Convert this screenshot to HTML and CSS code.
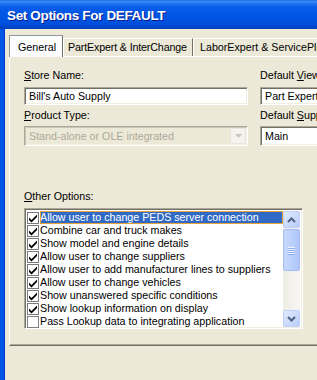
FILE: index.html
```html
<!DOCTYPE html>
<html lang="en">
<head>
    <meta charset="UTF-8">
    <title>Set Options For DEFAULT</title>
<link rel="stylesheet" href="styles.css">
</head>
<body>
    <div class="window">
        <div class="titlebar">
            <span class="title">Set Options For DEFAULT</span>
        </div>
        <div class="client">
            <div class="tabs">
                <div class="tab active">General</div>
                <div class="tab tab-part">PartExpert &amp; InterChange</div>
                <div class="tab tab-labor">LaborExpert &amp; ServicePlus</div>
            </div>
            <div class="panel">
                <div class="fields">
                    <div class="col col-left">
                        <div class="label"><u>S</u>tore Name:</div>
                        <div class="textbox">Bill's Auto Supply</div>
                        <div class="label label-gap"><u>P</u>roduct Type:</div>
                        <div class="combo disabled">
                            <span class="combo-text">Stand-alone or OLE integrated</span>
                            <span class="drop">
                                <svg width="7" height="4" viewBox="0 0 7 4"><path d="M0 0h7L3.5 4z" fill="#c9c7ba"/></svg>
                            </span>
                        </div>
                    </div>
                    <div class="col col-right">
                        <div class="label">Default <u>V</u>iew:</div>
                        <div class="textbox">Part Expert® InterChange</div>
                        <div class="label label-gap">Default <u>S</u>upplier:</div>
                        <div class="textbox tall">Main</div>
                    </div>
                </div>
                <div class="label label-other"><u>O</u>ther Options:</div>
                <div class="listbox">
                    <ul class="items">
                        <li class="item selected"><span class="check on"></span><span class="item-text">Allow user to change PEDS server connection</span></li>
                        <li class="item"><span class="check on"></span><span class="item-text">Combine car and truck makes</span></li>
                        <li class="item"><span class="check on"></span><span class="item-text">Show model and engine details</span></li>
                        <li class="item"><span class="check on"></span><span class="item-text">Allow user to change suppliers</span></li>
                        <li class="item"><span class="check on"></span><span class="item-text">Allow user to add manufacturer lines to suppliers</span></li>
                        <li class="item"><span class="check on"></span><span class="item-text">Allow user to change vehicles</span></li>
                        <li class="item"><span class="check on"></span><span class="item-text">Show unanswered specific conditions</span></li>
                        <li class="item"><span class="check on"></span><span class="item-text">Show lookup information on display</span></li>
                        <li class="item"><span class="check"></span><span class="item-text">Pass Lookup data to integrating application</span></li>
                    </ul>
                    <div class="scrollbar">
                        <div class="sb-btn">
                            <svg width="9" height="6" viewBox="0 0 9 6"><path d="M1 5l3.5-3.5L8 5" fill="none" stroke="#4d6185" stroke-width="2"/></svg>
                        </div>
                        <div class="sb-thumb">
                            <span class="grip"></span><span class="grip"></span><span class="grip"></span><span class="grip"></span>
                        </div>
                        <div class="sb-track"></div>
                        <div class="sb-btn">
                            <svg width="9" height="6" viewBox="0 0 9 6"><path d="M1 1l3.5 3.5L8 1" fill="none" stroke="#4d6185" stroke-width="2"/></svg>
                        </div>
                    </div>
                </div>
            </div>
        </div>
    </div>
</body>
</html>
```

FILE: styles.css
```css
body {
    margin: 0;
    width: 317px;
    height: 380px;
    overflow: hidden;
    background-color: #ece9d8;
    font-family: "Liberation Sans", Arial, sans-serif;
    font-size: 10.7px;
    color: #000000;
}
.window {
    width: 380px;
    height: 380px;
    border-left: 4px solid #0055e5;
    box-shadow: inset 1px 0 0 #0831d9;
    box-sizing: border-box;
}
.titlebar {
    height: 29px;
    margin-left: -4px;
    padding-left: 7px;
    display: flex;
    align-items: center;
    background: linear-gradient(to bottom, #0a5fd8 0, #3d8ff5 1px, #2a7af2 3px, #0a5de9 7px, #0055e5 16px, #004fdb 24px, #0043c6 28px, #003cb4 29px);
}
.title {
    color: #ffffff;
    font-weight: bold;
    font-size: 13.5px;
    letter-spacing: -0.35px;
    text-shadow: 1px 1px 0 #0a1e8c;
    padding-top: 1px;
}
.client {
    padding: 6px 0 0 5px;
}
.tabs {
    display: flex;
    align-items: flex-end;
    height: 21px;
}
.tab {
    height: 18px;
    box-sizing: border-box;
    padding: 2px 5px 0 5px;
    line-height: 13px;
    border-top: 1px solid #ffffff;
    border-left: 1px solid #ffffff;
    border-right: 1px solid #716f64;
    white-space: nowrap;
}
.tab.active {
    height: 22px;
    margin-bottom: -1px;
    padding: 5px 6px 0 8px;
    background-color: #fcfcfe;
    border-top-color: #919b9c;
    border-left-color: #919b9c;
    border-right: 1px solid #716f64;
    position: relative;
    z-index: 1;
}
.tab-part {
    width: 130px;
    padding-left: 4px;
    padding-right: 0;
    letter-spacing: -0.15px;
}
.tab-labor {
    padding-left: 6px;
}
.panel {
    height: 290px;
    box-sizing: border-box;
    padding: 12px 0 0 14px;
    border-top: 1px solid #ffffff;
    border-left: 1px solid #ffffff;
    border-bottom: 1px solid #716f64;
    box-shadow: inset 0 -1px 0 #aca899;
}
.fields {
    display: flex;
    gap: 12px;
}
.col-left {
    width: 224px;
}
.col-right {
    width: 120px;
}
.label {
    line-height: 13px;
    height: 13px;
    white-space: nowrap;
}
.label-gap {
    margin-top: 4px;
}
.textbox {
    margin-top: 5px;
    height: 18px;
    box-sizing: border-box;
    background-color: #ffffff;
    border-top: 1px solid #aca899;
    border-left: 1px solid #aca899;
    border-bottom: 1px solid #ffffff;
    border-right: 1px solid #ffffff;
    box-shadow: inset 1px 1px 0 #716f64, inset -1px -1px 0 #f1efe2;
    padding: 2px 0 0 4px;
    line-height: 13px;
    white-space: nowrap;
    overflow: hidden;
}
.textbox.tall {
    margin-top: 4px;
    height: 20px;
    padding-top: 3px;
}
.combo {
    margin-top: 4px;
    height: 20px;
    box-sizing: border-box;
    display: flex;
    align-items: center;
    justify-content: space-between;
    background-color: #ece9d8;
    border-top: 1px solid #aca899;
    border-left: 1px solid #aca899;
    border-bottom: 1px solid #ffffff;
    border-right: 1px solid #ffffff;
    box-shadow: inset 1px 1px 0 #c9c7ba, inset -1px -1px 0 #f1efe2;
    padding: 0 1px 0 4px;
}
.combo-text {
    color: #aca899;
    white-space: nowrap;
}
.drop {
    width: 16px;
    height: 16px;
    box-sizing: border-box;
    display: flex;
    align-items: center;
    justify-content: center;
    background-color: #f4f3ee;
    border: 1px solid #e8e6de;
}
.label-other {
    margin-top: 44px;
}
.listbox {
    margin-top: 5px;
    width: 279px;
    height: 121px;
    box-sizing: border-box;
    display: flex;
    background-color: #ffffff;
    border-top: 1px solid #aca899;
    border-left: 1px solid #aca899;
    border-bottom: 1px solid #ffffff;
    border-right: 1px solid #ffffff;
    box-shadow: inset 1px 1px 0 #716f64, inset -1px -1px 0 #f1efe2;
    padding: 2px 2px 1px 2px;
}
.items {
    list-style: none;
    margin: 0;
    padding: 0;
    flex: 1;
}
.item {
    display: flex;
    align-items: center;
    height: 13px;
    line-height: 13px;
    white-space: nowrap;
}
.check {
    width: 12px;
    height: 12px;
    margin-right: 1px;
    border: 1px solid #808080;
    box-sizing: border-box;
    background-color: #ffffff;
    flex-shrink: 0;
}
.check.on {
    border-color: #7a7a7a;
    background: #ffffff url("data:image/svg+xml,%3Csvg xmlns='http://www.w3.org/2000/svg' width='10' height='10' viewBox='0 0 10 10'%3E%3Cpath d='M1 4.5l2.5 2.5L9 1.5v2.5L3.5 9.5 1 7z' fill='%23000'/%3E%3C/svg%3E") center no-repeat;
}
.item-text {
    padding: 0 2px 0 0;
    flex: 1;
}
.item.selected .item-text {
    background-color: #316ac5;
    color: #ffffff;
    outline: 1px solid #e6a33c;
    outline-offset: -1px;
}
.scrollbar {
    width: 17px;
    display: flex;
    flex-direction: column;
    background: linear-gradient(to right, #eeede5, #f7f6f2);
}
.sb-btn {
    height: 17px;
    box-sizing: border-box;
    border: 1px solid #bcd0f9;
    border-radius: 2px;
    background: linear-gradient(to bottom right, #e1eafe, #b8cdf9);
    display: flex;
    align-items: center;
    justify-content: center;
}
.sb-thumb {
    height: 42px;
    margin-top: 1px;
    box-sizing: border-box;
    border: 1px solid #a6bcf0;
    border-radius: 2px;
    background: linear-gradient(to right, #c9d8fc, #b9cffb 60%, #adc4f7);
    display: flex;
    flex-direction: column;
    align-items: center;
    justify-content: center;
    gap: 1px;
}
.grip {
    width: 7px;
    height: 1px;
    background-color: #eef4fe;
    box-shadow: 0 1px 0 #8cb0f8;
}
.sb-track {
    flex: 1;
}
```
